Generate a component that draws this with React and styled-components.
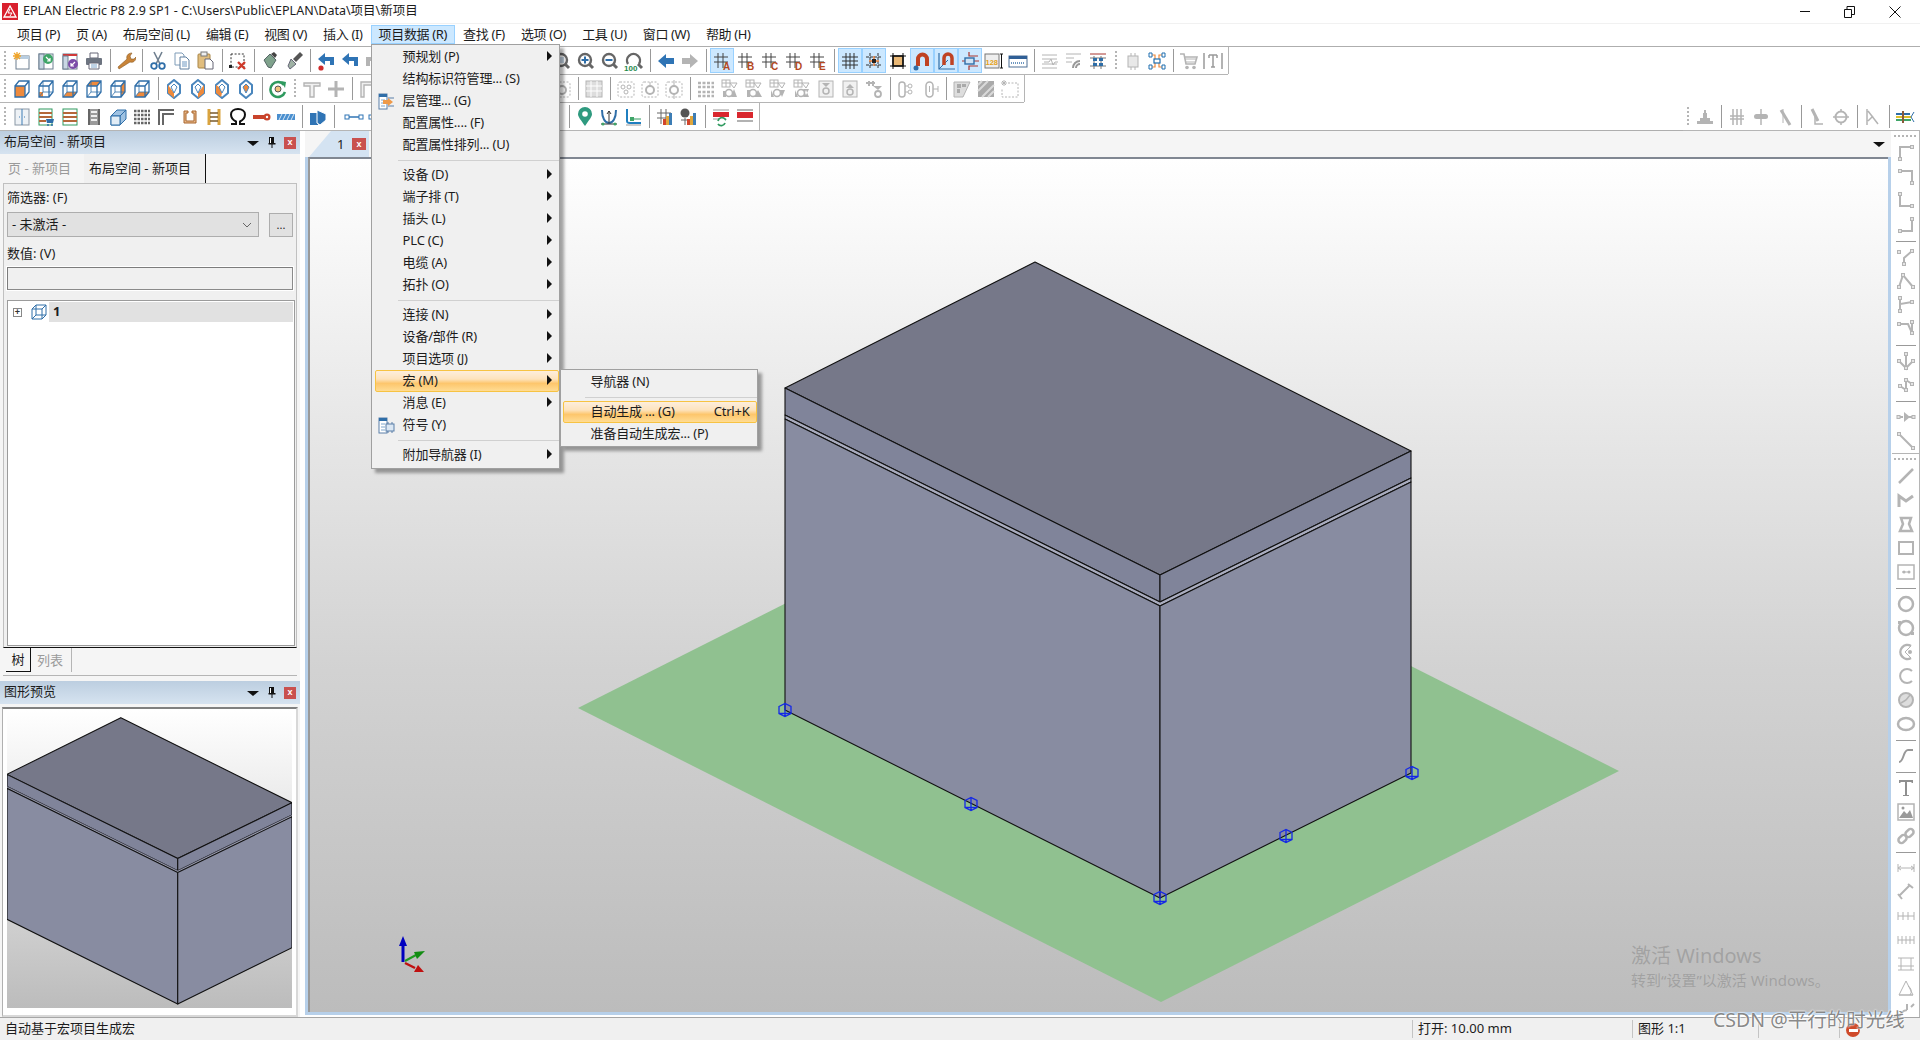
import React from "react";
import styled, { createGlobalStyle } from "styled-components";

const GlobalStyle = createGlobalStyle`
  html, body {
    margin: 0;
    background: #fff;
    overflow: hidden;
  }
`;

const G = "#b4b4b4";
const B = "#2f6ea8";
const O = "#ee8a3c";

const Hash = ({ c = "#444" }) => (
  <path d="M6 2v15M11 2v15M2 6h14M2 11h14" stroke={c} fill="none" />
);
const GridL = ({ l }) => (
  <>
    <Hash />
    <text x="11" y="19" fontSize="10" fontWeight="700" fontFamily="Liberation Sans" fill="#b5481d">{l}</text>
  </>
);
const Cube = ({ f }) => (
  <>
    <path d="M3 7h10v11H3z" fill={f === 0 ? O : "#fff"} />
    <path d="M3 7l4-5h10l-4 5z" fill={f === 1 ? O : "#fff"} />
    <path d="M13 7l4-5v11l-4 5z" fill={f === 2 ? O : "#fff"} />
    {f > 2 && <path d={f === 3 ? "M7 2v11H3v5h4z" : "M7 13h10l-4 5H3z"} fill={O} />}
    <path d="M3 7h10v11H3zM3 7l4-5h10v11l-4 5M13 7l4-5" fill="none" stroke={B} strokeWidth="1.3" />
    {f !== 0 && <path d="M7 2v11H17M7 13l-4 5" fill="none" stroke={B} strokeWidth=".8" />}
  </>
);
const Hex = ({ o }) => (
  <>
    <path d="M10 1l6 5v8l-6 5-6-5V6z" fill="#fff" stroke="#4a86bd" strokeWidth="2" />
    <path d={o} fill={O} />
    <path d="M10 5l3 3-3 6-3-6z" fill="none" stroke="#4a86bd" />
  </>
);
const Mag = ({ c = "#666", children }) => (
  <>
    <circle cx="9" cy="9" r="6" fill="#fff" stroke={c} strokeWidth="2.4" />
    <path d="M13 13l4 4" stroke={c} strokeWidth="3" />
    {children}
  </>
);
const Magnet = () => (
  <path d="M6 15V8a4.5 4.5 0 0 1 9 0v7" fill="none" stroke="#bf4222" strokeWidth="4" />
);
const Bars = () => (
  <path d="M2 4h15M2 8h15M2 13h15M2 17h15" stroke={G} fill="none" />
);
const GreyBox = ({ children }) => (
  <>
    <rect x="3" y="2" width="14" height="16" fill="#f1f1f1" stroke={G} />
    {children}
  </>
);
const Dashed = ({ children }) => (
  <>
    <rect x="2" y="3" width="16" height="15" rx="2" fill="none" stroke={G} strokeDasharray="2 1.5" />
    {children}
  </>
);
const Ring = () => <circle cx="10" cy="11" r="4" fill="none" stroke={G} strokeWidth="2" />;
const GridRing = ({ d = "M3 12h3v6H3zM14 10l3 8h-6z" }) => (
  <>
    <rect x="2" y="1" width="8" height="7" fill="none" stroke={G} />
    <path d="M2 4h8M6 1v7M10 4h7l-3 5z" stroke={G} fill="none" />
    <path d={d} fill={G} />
    <circle cx="9" cy="14" r="3.5" fill="#fff" stroke={G} strokeWidth="1.6" />
  </>
);

const ICONS = {
  newp: (
    <>
      <rect x="4" y="5" width="13" height="13" fill="#fff" stroke="#6d7f90" />
      <rect x="4" y="5" width="13" height="3" fill="#b8cde0" />
      <path d="M5 1v8M1 5h8M2 2l6 6M8 2L2 8" stroke="#f0a52a" strokeWidth="1.3" />
    </>
  ),
  openp: (
    <>
      <rect x="3" y="3" width="14" height="15" fill="#fff" stroke="#6d7f90" />
      <rect x="3" y="3" width="5" height="15" fill="#c9d7e4" stroke="#6d7f90" />
      <circle cx="12" cy="8" r="5" fill="#3fa568" />
      <path d="M10 6l4 4M14 7v3h-3" stroke="#fff" fill="none" strokeWidth="1.2" />
    </>
  ),
  closep: (
    <>
      <rect x="3" y="3" width="14" height="15" fill="#fff" stroke="#6d7f90" />
      <rect x="3" y="3" width="14" height="2" fill="#cf3a3a" />
      <rect x="3" y="5" width="5" height="13" fill="#c9d7e4" stroke="#6d7f90" />
      <circle cx="13" cy="13" r="5" fill="#7c4da8" />
      <path d="M15 11l-4 4M11 12v3h3" stroke="#fff" fill="none" strokeWidth="1.2" />
    </>
  ),
  print: (
    <>
      <path d="M6 2h8v5H6z" fill="#fff" stroke="#667" />
      <rect x="2" y="7" width="16" height="7" rx="1" fill="#6d7480" />
      <path d="M5 12h10v6H5z" fill="#fff" stroke="#667" />
      <path d="M7 14h6M7 16h6" stroke="#7fa6cc" />
    </>
  ),
  wrench: (
    <path d="M3 18l-1-2 9-8c-1-3 1-6 5-6l-2 3 1 3 3 0 2-2c0 4-3 6-6 5z" fill="#c98438" stroke="#8a5a25" strokeWidth=".6" />
  ),
  cut: (
    <>
      <path d="M6 1l6 12M14 1L8 13" stroke="#6f7f8f" strokeWidth="1.6" />
      <circle cx="6" cy="15" r="2.8" fill="none" stroke="#2f6ea8" strokeWidth="1.8" />
      <circle cx="14" cy="15" r="2.8" fill="none" stroke="#2f6ea8" strokeWidth="1.8" />
    </>
  ),
  copy: (
    <>
      <path d="M3 2h7l2 2v10H3z" fill="#fff" stroke="#7f9cb8" />
      <path d="M8 6h6l3 3v9H8z" fill="#fff" stroke="#5f7f9f" />
      <path d="M10 11h5M10 13h5M10 15h5" stroke="#6d97c1" />
    </>
  ),
  paste: (
    <>
      <rect x="2" y="3" width="12" height="14" rx="1" fill="#e0bd7e" stroke="#a98545" />
      <rect x="5" y="1" width="6" height="4" fill="#eee" stroke="#777" />
      <path d="M9 8h5l3 3v7H9z" fill="#fff" stroke="#667" />
    </>
  ),
  seldel: (
    <>
      <rect x="3" y="3" width="13" height="13" fill="none" stroke="#333" strokeDasharray="2 1.6" />
      <rect x="1" y="14" width="3" height="3" fill="#222" />
      <path d="M10 11l7 7M17 11l-7 7" stroke="#cf3a2a" strokeWidth="2.4" />
    </>
  ),
  brushA: (
    <>
      <path d="M4 9l6-6 6 6-5 8-3-1z" fill="#7fa28c" stroke="#566" />
      <path d="M11 3l3-2 3 3-2 3" fill="#444" />
    </>
  ),
  brushB: (
    <>
      <path d="M4 15l3-7 5 5-6 5z" fill="#9fb2a4" stroke="#667" />
      <path d="M9 8l7-7 3 3-7 7z" fill="#555" />
    </>
  ),
  undoR: (
    <>
      <path d="M16 14V8H7" fill="none" stroke="#2f74b5" strokeWidth="4" />
      <path d="M9 2L2 8l7 6z" fill="#2f74b5" />
      <circle cx="5" cy="17" r="2.6" fill="#cf2a2a" />
    </>
  ),
  undoB: (
    <>
      <path d="M16 15V8H7" fill="none" stroke="#2f74b5" strokeWidth="4" />
      <path d="M9 2L2 8l7 6z" fill="#2f74b5" />
    </>
  ),
  redoG: (
    <>
      <path d="M4 15V8h9" fill="none" stroke={G} strokeWidth="4" />
      <path d="M11 2l7 6-7 6z" fill={G} />
    </>
  ),
  zoomW: <Mag><rect x="6" y="6" width="6" height="6" fill="#c6d6e6" /></Mag>,
  zoomIn: <Mag><path d="M5.5 9h7M9 5.500v7" stroke={B} strokeWidth="2" /></Mag>,
  zoomOut: <Mag><path d="M5.500 9h7" stroke={B} strokeWidth="2" /></Mag>,
  zoom100: (
    <>
      <path d="M4 13a6.500 6.500 0 1 1 11 0" fill="none" stroke="#666" strokeWidth="2.400" />
      <path d="M14 13l4 4" stroke="#666" strokeWidth="3" />
      <text x="0" y="20" fontSize="8" fontWeight="700" fontFamily="Liberation Sans" fill="#1f8a4c">100</text>
    </>
  ),
  back: <path d="M10 3L2 10l8 7v-4h8V7h-8z" fill="#2f74b5" />,
  fwd: <path d="M10 3l8 7-8 7v-4H2V7h8z" fill={G} />,
  gA: <GridL l="A" />,
  gB: <GridL l="B" />,
  gC: <GridL l="C" />,
  gD: <GridL l="D" />,
  gE: <GridL l="E" />,
  grid: <path d="M6 2v16M10 2v16M14 2v16M2 6h16M2 10h16M2 14h16" stroke="#333" fill="none" />,
  gridSnap: (
    <>
      <path d="M6 2v16M14 2v16M2 6h16M2 14h16" stroke="#333" fill="none" strokeDasharray="3 1" />
      <path d="M10 5v10M5 10h10" stroke="#e9782d" strokeWidth="1.400" />
      <rect x="8" y="8" width="4" height="4" fill="#222" />
    </>
  ),
  sq: (
    <>
      <rect x="5" y="5" width="10" height="10" fill="#e9b876" stroke="#111" strokeWidth="1.500" />
      <path d="M5 2v16M15 2v16M2 5h16M2 15h16" stroke="#111" fill="none" />
    </>
  ),
  magA: (
    <>
      <Magnet />
      <path d="M4 15v4" stroke="#2f6ea8" strokeWidth="2" />
      <circle cx="4" cy="17" r="2.500" fill="#2f6ea8" />
    </>
  ),
  magB: (
    <>
      <path d="M3 2v16h16" fill="none" stroke="#2f6ea8" strokeWidth="1.200" />
      <path d="M3 18l9-9" stroke="#2f6ea8" />
      <path d="M8 14V7a4 4 0 0 1 8 0v7" fill="none" stroke="#bf4222" strokeWidth="3.500" />
    </>
  ),
  magC: (
    <>
      <path d="M9 1v4H15M9 19v-4H15M2 10h4M14 10h5M15 5h3M15 15h3" fill="none" stroke="#a9342e" strokeWidth="1.200" />
      <rect x="5" y="7" width="9" height="6" fill="#cfe4f6" stroke="#2f6ea8" strokeWidth="1.400" />
    </>
  ),
  n128: (
    <>
      <rect x="1" y="3" width="14" height="14" fill="#eee" stroke="#777" />
      <text x="1.500" y="13.500" fontSize="7.500" fontWeight="700" fontFamily="Liberation Sans" fill="#e4a11b">128</text>
      <path d="M16 3h3M17.500 3v14M16 17h3" stroke="#111" />
    </>
  ),
  disp: (
    <>
      <rect x="1" y="5" width="18" height="11" fill="#fff" stroke="#4d6f95" />
      <rect x="1" y="5" width="18" height="3" fill="#2f5f96" />
      <path d="M3 12h14" stroke="#6d97c1" strokeDasharray="1 1" strokeWidth="2" />
    </>
  ),
  g1: <><Bars /><path d="M4 11h5l2-3 2 6 2-3h3" stroke={G} fill="none" /></>,
  g2: <><path d="M2 3h15M2 7h8M2 11h6" stroke={G} /><path d="M9 17a7 7 0 0 1 7-7M12 17a4 4 0 0 1 4-4" stroke="#999" strokeWidth="2" fill="none" /></>,
  g3: (
    <>
      <path d="M2 3h16" stroke="#a9342e" />
      <path d="M2 7h16M2 15h16" stroke="#777" />
      <path d="M6 5v13M13 5v13" stroke="#777" />
      <path d="M5 7h4v3H5zM11 7h4v3h-4zM5 12h4v3H5zM11 12h4v3h-4z" fill="#2f6ea8" />
    </>
  ),
  chip: <><rect x="5" y="5" width="10" height="11" fill="#e8e8e8" stroke={G} /><path d="M8 2v3M12 2v3M8 16v3M12 16v3" stroke={G} /></>,
  net: (
    <>
      <path d="M4 4h4v5h4V4h4M4 16h4v-5h4v5h4" fill="none" stroke="#ee8a3c" strokeWidth="1.200" />
      <rect x="7" y="8" width="6" height="4" fill="#fff" stroke="#1f6fb0" strokeWidth="1.200" />
      <path d="M2 2h3v4H2zM15 2h3v4h-3zM2 14h3v4H2zM15 14h3v4h-3z" fill="#fff" stroke="#1f6fb0" />
    </>
  ),
  cart: (
    <>
      <path d="M1 3h4l2 10h9l2-7H6" fill="none" stroke={G} strokeWidth="1.600" />
      <path d="M6 8h11M7 11h10" stroke={G} />
      <circle cx="8" cy="16.500" r="1.800" fill={G} />
      <circle cx="15" cy="16.500" r="1.800" fill={G} />
    </>
  ),
  textT: <path d="M1 2v16M19 2v16M6 4h8M10 4v12M8 16h4M6 4v3M14 4v3" stroke="#9a9a9a" strokeWidth="1.500" fill="none" />,

  c1: <Cube f={0} />,
  c2: <Cube f={3} />,
  c3: <Cube f={4} />,
  c4: <Cube f={1} />,
  c5: <Cube f={2} />,
  c6: <Cube f={5} />,
  h1: <Hex o="M4 6l6 8V19l-6-5z" />,
  h2: <Hex o="M16 6l-6 8V19l6-5z" />,
  h3: <Hex o="M4 6l3 2 3 6-1 4-5-4z" />,
  h4: <Hex o="M10 5l3 3-3 6-3-6z" />,
  refresh: (
    <>
      <path d="M16 6a7.500 7.500 0 1 0 1 7" fill="none" stroke="#2f9a5f" strokeWidth="2.500" />
      <path d="M13 2l5 1-1 6z" fill="#2f9a5f" />
      <circle cx="10" cy="10" r="3" fill="#f0c27a" stroke="#555" />
    </>
  ),
  tee: <path d="M2 4h16v3h-6v11H8V7H2z" fill="#f0f0f0" stroke={G} strokeWidth="1.400" />,
  plus: <path d="M10 2v16M2 10h16" stroke={G} strokeWidth="3" />,
  corner: <path d="M3 18V3h15v3H6v12z" fill="#f0f0f0" stroke={G} strokeWidth="1.400" />,
  mg1: <Dashed><Ring /></Dashed>,
  mg2: (
    <>
      <rect x="2" y="2" width="16" height="16" fill="#ddd" stroke={G} />
      <path d="M2 7h16M2 12h16M7 2v16M13 2v16" stroke="#fff" />
    </>
  ),
  d1: <Dashed><circle cx="7" cy="8" r="2" fill="none" stroke={G} /><circle cx="13" cy="8" r="2" fill="none" stroke={G} /><circle cx="10" cy="13" r="2" fill="none" stroke={G} /></Dashed>,
  d2: <Dashed><path d="M10 3v4" stroke={G} /><Ring /></Dashed>,
  d3: <Dashed><path d="M10 1v5M10 15v5" stroke={G} /><Ring /></Dashed>,
  v1: <path d="M2 4h16M2 8h16M2 13h16M2 17h16" stroke={G} strokeWidth="2.500" strokeDasharray="3 1.500" fill="none" />,
  v2: <GridRing />,
  v3: <GridRing d="M3 11h3v7H3zM14 11l4 7h-8z" />,
  v4: <GridRing d="M3 11v7h3M11 11h6l-3 7z" />,
  v5: <GridRing d="M3 11v7h3M11 18h6l-3-7zM11 10h6l-3 6z" />,
  v6: <GreyBox><path d="M6 4h8l-4 4z" fill={G} /><circle cx="10" cy="12" r="3" fill="none" stroke={G} strokeWidth="1.500" /></GreyBox>,
  v7: <GreyBox><path d="M6 9h8l-4-4z" fill={G} /><circle cx="10" cy="13" r="3" fill="none" stroke={G} strokeWidth="1.500" /></GreyBox>,
  v8: <><path d="M2 4h9M5 2v5M9 2v5" stroke={G} strokeWidth="2" /><path d="M9 7h9l-4 4z" fill={G} /><circle cx="14" cy="15" r="3" fill="none" stroke={G} strokeWidth="1.800" /></>,
  w1: <><rect x="3" y="3" width="6" height="15" rx="3" fill="none" stroke={G} strokeWidth="1.500" /><circle cx="14" cy="7" r="2" fill="none" stroke={G} /><circle cx="14" cy="13" r="2" fill="none" stroke={G} /><path d="M9 7h3M9 13h3" stroke={G} /></>,
  w2: <><rect x="6" y="3" width="7" height="15" rx="3.500" fill="none" stroke={G} strokeWidth="1.500" /><path d="M9.500 7v6M13 10h5M18 7v6" stroke={G} /></>,
  x1: <><path d="M2 3h16l-7 15H2z" fill="#ddd" stroke={G} /><path d="M5 5h4v4H5zM10 5h4v3h-4zM5 10h3v4H5z" fill="#aaa" /></>,
  x2: <><rect x="2" y="2" width="16" height="16" fill="#aaa" /><path d="M2 12L12 2M6 18L18 6M12 18l6-6M2 6l4-4" stroke="#d9d9d9" strokeWidth="2" /></>,
  x3: <><path d="M8 4h10v14H2V9" fill="none" stroke={G} strokeDasharray="2 1.500" /><path d="M4 1v6M1 4h6M2 2l4 4M6 2L2 6" stroke={G} /></>,

  cabinet: (
    <>
      <rect x="3" y="2" width="14" height="16" fill="#eef2f6" stroke="#8a97a5" />
      <path d="M10 2v16M7 10h1M12 10h1" stroke="#3d7db5" />
    </>
  ),
  listCart: (
    <>
      <rect x="3" y="2" width="13" height="16" fill="#fff" stroke="#2f9a5f" />
      <path d="M3 6h13M3 10h13M3 14h7" stroke="#b5683a" strokeWidth="2" />
      <path d="M10 12h8l-1 4h-6z" fill="#2f6ea8" />
      <circle cx="12" cy="18" r="1" fill="#2f6ea8" />
      <circle cx="16" cy="18" r="1" fill="#2f6ea8" />
    </>
  ),
  stripes: (
    <>
      <rect x="3" y="2" width="14" height="16" fill="#fff" stroke="#2f9a5f" />
      <path d="M3 6h14M3 10h14M3 14h14" stroke="#b5683a" strokeWidth="2" />
    </>
  ),
  rail: (
    <>
      <path d="M5 2v16M15 2v16" stroke="#666" strokeWidth="2" />
      <path d="M6 2h8v16H6z" fill="#9a9a9a" />
      <path d="M7 5h6M7 9h6M7 13h6" stroke="#eee" strokeWidth="2" />
    </>
  ),
  box3d: (
    <>
      <path d="M3 9l6-6h9v9l-6 6H3z" fill="#9fc2e2" stroke="#2f6ea8" />
      <path d="M3 9h9v9M12 9l6-6" stroke="#2f6ea8" fill="none" />
      <path d="M3 9h9v9H3z" fill="#e2edf6" stroke="#2f6ea8" />
    </>
  ),
  dotgrid: <path d="M2 4h16M2 8h16M2 12h16M2 16h16" stroke="#666" strokeWidth="2.400" strokeDasharray="2.500 1" />,
  corner2: <path d="M3 18V3h15M7 18V7h11" fill="none" stroke="#666" strokeWidth="2" />,
  uorange: <path d="M4 4h4v2H6v8h8V6h-2V4h4v12H4z" fill="#e6b98a" stroke="#a9642c" />,
  ladder: (
    <>
      <path d="M5 2v16M15 2v16" stroke="#d9a33f" strokeWidth="3" />
      <path d="M6 6h8M6 10h8M6 14h8" stroke="#7a5a2a" strokeWidth="1.500" />
    </>
  ),
  omega: (
    <path d="M3 17h5v-2.500C5 13 3 10.500 3 7.500 3 4 6 2 10 2s7 2 7 5.500c0 3-2 5.500-5 7V17h5" fill="none" stroke="#111" strokeWidth="2" />
  ),
  pinRed: (
    <>
      <rect x="1" y="8" width="13" height="4" fill="#c9442c" />
      <circle cx="15" cy="10" r="3.500" fill="#c9442c" />
      <circle cx="15" cy="10" r="1.200" fill="#fff" />
    </>
  ),
  barBlue: (
    <>
      <rect x="1" y="7" width="18" height="6" fill="#4a8fcf" />
      <path d="M3 13l3-6M7 13l3-6M11 13l3-6M15 13l3-6" stroke="#d8e8f6" />
    </>
  ),
  blueShape: (
    <>
      <path d="M2 6h8v12H2z" fill="#2f74b5" />
      <path d="M9 3l9 4v6l-6 5-3-2z" fill="#2f74b5" stroke="#fff" />
    </>
  ),
  conn: (
    <>
      <path d="M3 10h14" stroke="#2f74b5" strokeWidth="1.500" />
      <rect x="1" y="8" width="4" height="4" fill="#fff" stroke="#2f74b5" />
      <rect x="15" y="8" width="4" height="4" fill="#fff" stroke="#2f74b5" />
    </>
  ),
  pin: (
    <>
      <path d="M10 19C6 13 3 10 3 7a7 7 0 0 1 14 0c0 3-3 6-7 12z" fill="#2f9a7f" />
      <circle cx="10" cy="7" r="2.800" fill="#fff" />
    </>
  ),
  uBlue: (
    <>
      <path d="M3 3c0 8 3 13 7 13s7-5 7-13" fill="none" stroke="#2f6ea8" strokeWidth="2" />
      <path d="M10 4v12M2 17h16" stroke="#333" />
      <path d="M8 7l2-3 2 3" fill="none" stroke="#333" />
      <circle cx="4" cy="17" r="1.500" fill="#3fa568" />
      <circle cx="16" cy="17" r="1.500" fill="#3fa568" />
    </>
  ),
  lBlue: (
    <>
      <path d="M4 2v12c0 2 1 2 3 2h11" fill="none" stroke="#1f7fc0" strokeWidth="2" />
      <path d="M8 12h10" stroke="#2f9a5f" />
      <rect x="7" y="10" width="4" height="4" fill="#3fa568" />
      <path d="M3 18h15" stroke="#999" />
    </>
  ),
  gridChart: (
    <>
      <Hash c="#666" />
      <rect x="8" y="12" width="3" height="6" fill="#d2452c" />
      <rect x="11" y="9" width="3" height="9" fill="#e0a63b" />
      <rect x="14" y="6" width="3" height="12" fill="#3d7db5" />
    </>
  ),
  gearChart: (
    <>
      <circle cx="6" cy="6" r="4.500" fill="#555" />
      <path d="M2 13h9M6 11v7" stroke="#666" />
      <rect x="8" y="12" width="3" height="6" fill="#d2452c" />
      <rect x="11" y="9" width="3" height="9" fill="#e0a63b" />
      <rect x="14" y="6" width="3" height="12" fill="#3d7db5" />
    </>
  ),
  stripeRefresh: (
    <>
      <path d="M2 3h16" stroke="#999" />
      <rect x="2" y="5" width="16" height="5" fill="#d9272e" />
      <path d="M2 12h6" stroke="#999" />
      <path d="M7 14a4 4 0 0 1 7-2l1 1M14 16a4 4 0 0 1-7 1" fill="none" stroke="#2f9a5f" strokeWidth="1.800" />
    </>
  ),
  stripeRed: (
    <>
      <path d="M2 3h16M2 14h16" stroke="#999" strokeWidth="1.400" />
      <rect x="2" y="5" width="16" height="6" fill="#d9272e" />
    </>
  ),

  stamp: <path d="M2 14h16v3H2zM5 11h10v3H5zM8 6h4v5H8zM9 3h2v3H9z" fill={G} />,
  bar3: <path d="M6 2v16M10 2v16M14 2v16M3 9h14M3 12h14" stroke={G} strokeWidth="1.500" />,
  ovalV: <><path d="M10 2v16" stroke={G} strokeWidth="1.500" /><rect x="3" y="7" width="14" height="5" rx="2.500" fill={G} /></>,
  slash: <><path d="M6 3l9 15" stroke={G} strokeWidth="3" /><path d="M8 2v14" stroke={G} /></>,
  slashL: <><path d="M5 2l6 12" stroke={G} strokeWidth="3" /><path d="M8 8v9h8" stroke={G} strokeWidth="1.500" fill="none" /></>,
  circleBar: <><circle cx="10" cy="10" r="5.500" fill="none" stroke={G} strokeWidth="2" /><path d="M2 10h16M10 2v3M10 15v3" stroke={G} strokeWidth="1.500" /></>,
  triV: <path d="M4 2v16M5 4l10 13M5 14l5-5" stroke={G} strokeWidth="1.500" fill="none" />,
  rainbow: (
    <>
      <path d="M1 7h14" stroke="#2f6ea8" strokeWidth="2" />
      <path d="M1 10h15" stroke="#e0c02a" strokeWidth="2" />
      <path d="M1 13h15" stroke="#3fa568" strokeWidth="2" />
      <path d="M8 4v12" stroke="#8a5a3a" strokeWidth="2" />
      <path d="M19 5l-3 5 3 5" fill="none" stroke="#2f6ea8" />
    </>
  ),
};

const routeIcon = (pts, nodes) => (
  <>
    <polyline points={pts} fill="none" stroke={G} strokeWidth="2" />
    {nodes.map(([x, y], i) => (
      <rect key={i} x={x - 1.5} y={y - 1.5} width="3" height="3" fill="#e4e4e4" stroke={G} />
    ))}
  </>
);
const VERT = [
  routeIcon("4,16 4,4 16,4", [[4, 16], [16, 4]]),
  routeIcon("4,4 16,4 16,16", [[4, 4], [16, 16]]),
  routeIcon("4,3 4,15 16,15", [[4, 3], [16, 15]]),
  routeIcon("4,16 16,16 16,4", [[4, 16], [16, 4]]),
  "|",
  routeIcon("16,4 8,11 8,17 M3,5", [[3, 5], [16, 4], [8, 17]]),
  routeIcon("3,16 7,4 17,16", [[7, 4], [3, 16], [17, 16]]),
  routeIcon("4,3 4,16 4,9 16,7", [[4, 3], [4, 16], [16, 7]]),
  routeIcon("3,5 12,5 16,14 16,3", [[3, 5], [16, 3], [16, 14]]),
  "|",
  routeIcon("10,3 10,17 3,10 10,17 17,10", [[10, 3], [3, 10], [17, 10], [10, 17]]),
  routeIcon("4,11 10,15 10,5 16,9", [[4, 11], [16, 9], [10, 5], [10, 15]]),
  "|",
  <>
    <path d="M2 10h5M13 10h5" stroke={G} strokeWidth="2" />
    <path d="M8 5l6 5-6 5z" fill={G} />
    <rect x="1" y="8.500" width="3" height="3" fill="#e4e4e4" stroke={G} />
    <rect x="16" y="8.500" width="3" height="3" fill="#e4e4e4" stroke={G} />
  </>,
  routeIcon("3,3 17,17", [[3, 3], [17, 17]]),
  "line",
  <path d="M3 17L17 3" stroke={G} strokeWidth="2.500" />,
  <path d="M3 17V6l7 5 7-5" fill="none" stroke={G} strokeWidth="3" />,
  <path d="M5 4h10l-2 6 3 7H4l3-7z" fill="none" stroke={G} strokeWidth="2.500" />,
  <rect x="3" y="4" width="14" height="12" fill="none" stroke={G} strokeWidth="2" />,
  <>
    <rect x="2" y="3" width="16" height="14" fill="#fff" stroke={G} strokeWidth="1.500" />
    <path d="M6 10h8" stroke={G} />
    <circle cx="8" cy="10" r="1.500" fill={G} />
    <circle cx="13" cy="10" r="1.500" fill={G} />
  </>,
  "|",
  <circle cx="10" cy="10" r="7" fill="none" stroke={G} strokeWidth="2.500" />,
  <>
    <circle cx="10" cy="10" r="7" fill="none" stroke={G} strokeWidth="2.500" />
    <rect x="2" y="3" width="3" height="3" fill={G} />
    <rect x="15" y="14" width="3" height="3" fill={G} />
  </>,
  <>
    <path d="M15 4a7 7 0 1 0 0 12" fill="none" stroke={G} strokeWidth="2.500" />
    <path d="M15 4L9 10l6 6" fill="none" stroke={G} />
    <circle cx="14" cy="10" r="2" fill={G} />
  </>,
  <path d="M16 5a7 7 0 1 0 0 10" fill="none" stroke={G} strokeWidth="2" />,
  <>
    <circle cx="10" cy="10" r="7" fill="#ddd" stroke={G} strokeWidth="2" />
    <path d="M10 10l4-5M10 10l-5 3" stroke={G} strokeWidth="1.500" />
  </>,
  <ellipse cx="10" cy="10" rx="8" ry="6" fill="none" stroke={G} strokeWidth="2.500" />,
  "|",
  <path d="M3 16c5 0 4-12 9-12h5" fill="none" stroke="#999" strokeWidth="2" />,
  "|",
  <path d="M3 2h14v3h-1l-1-1h-4v13h2v1H7v-1h2V4H5L4 5H3z" fill="#8f8f8f" />,
  <>
    <rect x="2" y="2" width="16" height="16" fill="#fff" stroke={G} strokeWidth="1.500" />
    <path d="M3 16l5-7 3 3 3-4 3 8z" fill="#9a9a9a" />
    <circle cx="7" cy="6" r="1.500" fill="#9a9a9a" />
  </>,
  <>
    <rect x="2" y="10" width="9" height="6" rx="3" transform="rotate(-45 6.500 13)" fill="none" stroke={G} strokeWidth="2.500" />
    <rect x="9" y="4" width="9" height="6" rx="3" transform="rotate(-45 13.500 7)" fill="none" stroke={G} strokeWidth="2.500" />
  </>,
  "|",
  <path d="M2 6v8M18 6v8M2 10h16M5 8l-3 2 3 2M15 8l3 2-3 2" fill="none" stroke={G} />,
  <path d="M3 14L14 3M2 12l4 5M12 2l5 4" fill="none" stroke={G} strokeWidth="2" />,
  <path d="M2 6v8M18 6v8M7 6v8M12 6v8M2 10h16" fill="none" stroke={G} />,
  <path d="M2 6v8M18 6v8M6 6v8M10 6v8M14 6v8M2 10h16" fill="none" stroke={G} />,
  <path d="M2 4h16M2 16h16M5 4v12M15 4v12M2 12h16" fill="none" stroke={G} />,
  <path d="M3 17L10 3l7 14zM3 17h14M12 8a6 6 0 0 1 2 9" fill="none" stroke={G} />,
  <path d="M3 17a9 9 0 0 1 8-9M11 2v6M15 5l3-3" fill="none" stroke={G} strokeWidth="2" />,
];

const ROW1 = [
  ".", "newp", "openp", "closep", "print", "|", "wrench", "|", "cut", "copy", "paste", "|", "seldel", "|",
  "brushA", "brushB", "|", "undoR", "undoB", "redoG", 164,
  "zoomW", "zoomIn", "zoomOut", "zoom100", "|", "back", "fwd", "|",
  "+gA", "gB", "gC", "gD", "gE", "|", "+grid", "+gridSnap", "sq", "+magA", "+magB", "+magC", "n128", "disp", "|", "g1", "g2", "g3",
];
const ROW1B = [".", "chip", "net", "|", "cart", "textT"];
const ROW2 = [
  ".", "c1", "c2", "c3", "c4", "c5", "c6", "|", "h1", "h2", "h3", "h4", "|", "refresh", ".", "tee", "plus", "|", "corner", 170,
  "mg1", "|", "mg2", "|", "d1", "d2", "d3", "|", "v1", "v2", "v3", "v4", "v5", "v6", "v7", "v8", "|", "w1", "w2", "|", "x1", "x2", "x3",
];
const ROW3 = [
  ".", "cabinet", "listCart", "stripes", "rail", "box3d", "dotgrid", "corner2", "uorange", "ladder", "omega", "pinRed", "barBlue", "|",
  "blueShape", "|", 4, "conn", "conn", 175, "|", "pin", "uBlue", "lBlue", "|", "gridChart", "gearChart", "|", "stripeRefresh", "stripeRed",
];
const ROW3B = [".", "stamp", "|", "bar3", "ovalV", "slash", "|", "slashL", "circleBar", "|", "triV", "|", "rainbow"];

const MENUS = [
  "项目 (P)", "页 (A)", "布局空间 (L)", "编辑 (E)", "视图 (V)", "插入 (I)", "项目数据 (R)",
  "查找 (F)", "选项 (O)", "工具 (U)", "窗口 (W)", "帮助 (H)",
];

const DROPDOWN = [
  { t: "预规划 (P)", sub: true },
  { t: "结构标识符管理... (S)" },
  { t: "层管理... (G)", icon: "layer" },
  { t: "配置属性.... (F)" },
  { t: "配置属性排列... (U)" },
  "-",
  { t: "设备 (D)", sub: true },
  { t: "端子排 (T)", sub: true },
  { t: "插头 (L)", sub: true },
  { t: "PLC (C)", sub: true },
  { t: "电缆 (A)", sub: true },
  { t: "拓扑 (O)", sub: true },
  "-",
  { t: "连接 (N)", sub: true },
  { t: "设备/部件 (R)", sub: true },
  { t: "项目选项 (J)", sub: true },
  { t: "宏 (M)", sub: true, active: true },
  { t: "消息 (E)", sub: true },
  { t: "符号 (Y)", icon: "symbol" },
  "-",
  { t: "附加导航器 (I)", sub: true },
];

const FONT = `"Noto Sans", "Noto Sans CJK SC", sans-serif`;
const HOT = "linear-gradient(#fdeedd 0%, #fde3bd 40%, #fdc66c 62%, #ffdc93 100%)";

const Page = styled.div`
  position: relative;
  width: 1920px;
  height: 1040px;
  display: flex;
  flex-direction: column;
  overflow: hidden;
  background: #fff;
  font: 13px/1 ${FONT};
  color: #1c1c1c;
`;

const TitleBar = styled.div`
  height: 23px;
  display: flex;
  align-items: center;
  padding-left: 2px;
  font-size: 12.5px;
`;

const TitleText = styled.span`
  margin-left: 5px;
  white-space: nowrap;
`;

const WindowButtons = styled.div`
  margin-left: auto;
  display: flex;
  padding-right: 3px;
`;

const WindowButton = styled.div`
  width: 45px;
  height: 23px;
  display: flex;
  align-items: center;
  justify-content: center;
`;

const MenuBar = styled.div`
  height: 21px;
  display: flex;
  align-items: flex-start;
  border-top: 1px solid #f1f1f1;
  padding: 1px 0 0 9px;
  letter-spacing: -0.35px;
`;

const MenuItem = styled.div`
  position: relative;
  box-sizing: border-box;
  height: 19px;
  display: flex;
  align-items: center;
  padding: 0 7px 1px;
  white-space: nowrap;
  border: 1px solid ${(p) => (p.$open ? "#99d1ff" : "transparent")};
  background: ${(p) => (p.$open ? "#cce8ff" : "transparent")};
`;

const ToolArea = styled.div`
  display: flex;
  flex-direction: column;
  border-top: 1px solid #aeaeae;
  border-bottom: 1px solid #aeaeae;
`;

const ToolRow = styled.div`
  height: 27px;
  display: flex;
  justify-content: space-between;
  align-items: stretch;
  & + & {
    margin-top: 1px;
  }
`;

const ToolBar = styled.div`
  display: flex;
  align-items: center;
  padding-right: ${(p) => p.$pad || 0}px;
  box-shadow: 0 1px 0 #b5b5b5, 1px 0 0 #b5b5b5;
`;

const Gripper = styled.div`
  width: 10px;
  height: 20px;
  flex: none;
  background: radial-gradient(circle at 1px 1px, #b5b5b5 1px, transparent 1px) 4px 0 / 2px 4px repeat-y;
`;

const Spacer = styled.div`
  flex: none;
  width: ${(p) => p.$w}px;
`;

const Sep = styled.div`
  flex: none;
  width: 8px;
  height: 23px;
  background: linear-gradient(#999, #999) center / 1px 100% no-repeat;
`;

const ToolButton = styled.div`
  flex: none;
  box-sizing: border-box;
  width: 24px;
  height: 25px;
  display: flex;
  align-items: center;
  justify-content: center;
  background: ${(p) => (p.$on ? "#cce8ff" : "transparent")};
  box-shadow: ${(p) => (p.$on ? "inset 0 0 0 1px #99d1ff" : "none")};
`;

const Main = styled.div`
  flex: 1;
  min-height: 0;
  display: flex;
`;

const Dock = styled.div`
  width: 300px;
  flex: none;
  display: flex;
  flex-direction: column;
  background: #f5f5f5;
`;

const PanelTitle = styled.div`
  height: 23px;
  flex: none;
  box-sizing: border-box;
  display: flex;
  align-items: center;
  padding: 0 4px 2px;
  background: linear-gradient(#bccee0, #d6e3f0);
  font-size: 13px;
`;

const TitleTools = styled.div`
  margin-left: auto;
  display: flex;
  align-items: center;
  gap: 7px;
  margin-bottom: -2px;
`;

const CloseBox = styled.div`
  width: ${(p) => p.$w || 12}px;
  height: 12px;
  display: flex;
  align-items: center;
  justify-content: center;
  background: #c9514f;
  color: #fff;
  font: 700 9px/1 "Liberation Sans", sans-serif;
`;

const DockTabs = styled.div`
  height: 29px;
  flex: none;
  display: flex;
  align-items: center;
  padding-left: 8px;
`;

const DockTab = styled.div`
  height: 100%;
  display: flex;
  align-items: center;
  color: ${(p) => (p.$active ? "#1c1c1c" : "#9a9a9a")};
  background: ${(p) => (p.$active ? "#f0f0f0" : "transparent")};
  padding: ${(p) => (p.$active ? "0 14px 0 5px" : "0 13px 0 0")};
  border-right: ${(p) => (p.$active ? "1px solid #111" : "0")};
`;

const PanelBody = styled.div`
  flex: none;
  box-sizing: border-box;
  height: 465px;
  margin: 0 3px;
  padding: 6px 3px 0;
  display: flex;
  flex-direction: column;
  background: #f0f0f0;
  border: 1px solid #c0c0c0;
  border-bottom: 1px solid #111;
`;

const FieldLabel = styled.div`
  height: 14px;
  display: flex;
  align-items: center;
  margin-top: ${(p) => p.$top || 0}px;
`;

const FilterRow = styled.div`
  display: flex;
  gap: 10px;
  margin-top: 8px;
`;

const Select = styled.div`
  box-sizing: border-box;
  width: 253px;
  height: 25px;
  display: flex;
  align-items: center;
  justify-content: space-between;
  padding: 0 6px 0 4px;
  background: #e1e1e1;
  border: 1px solid #adadad;
`;

const DotsButton = styled.div`
  box-sizing: border-box;
  width: 24px;
  height: 24px;
  margin-top: 1px;
  display: flex;
  align-items: flex-end;
  justify-content: center;
  padding-bottom: 6px;
  background: #e1e1e1;
  border: 1px solid #adadad;
  font-size: 11px;
`;

const ValueInput = styled.div`
  box-sizing: border-box;
  width: 286px;
  height: 23px;
  margin-top: 7px;
  background: #f0f0f0;
  border: 1px solid;
  border-color: #7c7c7c #8a8a8a #8a8a8a #7c7c7c;
  box-shadow: 0 0 0 1px #fff;
`;

const Tree = styled.div`
  flex: 1;
  margin: 10px 0 1px;
  width: 288px;
  box-sizing: border-box;
  background: #fff;
  border: 1px solid #9b9b9b;
  padding: 1px 1px 0 5px;
`;

const TreeRow = styled.div`
  height: 20px;
  display: flex;
  align-items: center;
`;

const Expander = styled.div`
  box-sizing: border-box;
  width: 9px;
  height: 9px;
  border: 1px solid #888;
  display: flex;
  align-items: center;
  justify-content: center;
  font: 700 9px/1 "Liberation Sans", sans-serif;
  color: #333;
  margin-right: 9px;
  flex: none;
`;

const TreeLabel = styled.div`
  flex: 1;
  height: 100%;
  box-sizing: border-box;
  margin-left: 2px;
  padding: 0 0 2px 4px;
  display: flex;
  align-items: center;
  background: #e1e1e1;
  font-weight: 700;
`;

const BottomTabs = styled.div`
  height: 28px;
  flex: none;
  margin: 0 3px;
  padding-left: 3px;
  display: flex;
  border-bottom: 1px solid #b5b5b5;
  box-sizing: border-box;
`;

const BottomTab = styled.div`
  width: ${(p) => (p.$active ? 25 : 41)}px;
  box-sizing: border-box;
  height: 24px;
  display: flex;
  align-items: center;
  white-space: nowrap;
  justify-content: ${(p) => (p.$active ? "center" : "flex-end")};
  padding-right: ${(p) => (p.$active ? 0 : 8)}px;
  color: ${(p) => (p.$active ? "#1c1c1c" : "#9a9a9a")};
  border-right: 1px solid ${(p) => (p.$active ? "#111" : "#b5b5b5")};
  border-bottom: ${(p) => (p.$active ? "1px solid #111" : "0")};
`;

const SecondTitle = styled(PanelTitle)`
  margin-top: 5px;
`;

const PreviewFrame = styled.div`
  flex: 1;
  min-height: 0;
  margin: 3px 2px 0;
  padding: 1px 4px 7px;
  background: #fff;
  border-top: 2px solid #808080;
  border-left: 1px solid #b0b0b0;
  border-right: 2px solid #d8d8d8;
  border-bottom: 2px solid #d8d8d8;
  display: flex;
  box-sizing: border-box;
`;

const PreviewCanvas = styled.svg`
  display: block;
  width: 100%;
  height: 100%;
  background: linear-gradient(#fff 0%, #e8e8e8 35%, #bcbcbc 100%);
`;

const Doc = styled.div`
  flex: 1;
  min-width: 0;
  margin-left: 5px;
  display: flex;
  flex-direction: column;
  background: #fff;
`;

const DocTabs = styled.div`
  height: 26px;
  flex: none;
  display: flex;
  align-items: center;
  justify-content: space-between;
  padding: 0 6px 0 0;
  background: #f5f5f5;
`;

const DocTab = styled.div`
  width: 60px;
  height: 26px;
  margin-left: 4px;
  padding-left: 28px;
  box-sizing: border-box;
  display: flex;
  align-items: center;
  justify-content: space-between;
  padding-right: 3px;
  background: #d4e3f2;
  clip-path: polygon(0 100%, 22px 0, 100% 0, 100% 100%);
  font-size: 13px;
`;

const Frame = styled.div`
  flex: 1;
  min-height: 0;
  position: relative;
  border: solid #b7d0ea;
  border-width: 0 3px 3px 3px;
  margin-bottom: 2px;
  box-shadow: 0 2px 0 #fff;
`;

const Viewport = styled.div`
  position: relative;
  height: 100%;
  box-sizing: border-box;
  border-top: 2px solid #808792;
  border-left: 2px solid #9a9a9a;
  background: linear-gradient(#fff 0%, #e8e8e8 30%, #d2d2d2 60%, #bcbcbc 100%);
  overflow: hidden;
`;

const Scene = styled.svg`
  display: block;
  width: 100%;
  height: 100%;
`;

const Activate = styled.div`
  position: absolute;
  left: 1321px;
  top: 785px;
  color: rgba(120, 120, 120, 0.42);
  white-space: nowrap;
`;

const ActivateTitle = styled.div`
  font-size: 20px;
  line-height: 24px;
`;

const ActivateHint = styled.div`
  font-size: 15px;
  line-height: 24px;
`;

const SideBar = styled.div`
  width: 27px;
  flex: none;
  margin-left: 1px;
  border-right: 1px solid #b5b5b5;
  overflow: hidden;
  display: flex;
  flex-direction: column;
  align-items: center;
`;

const SideGripper = styled.div`
  width: 24px;
  height: 10px;
  flex: none;
  background: radial-gradient(circle at 1px 1px, #b5b5b5 1px, transparent 1px) 0 4px / 4px 2px repeat-x;
`;

const SideLine = styled.div`
  width: 100%;
  height: 1px;
  flex: none;
  background: #b5b5b5;
`;

const SideSep = styled.div`
  width: 20px;
  height: 8px;
  flex: none;
  background: linear-gradient(#999, #999) center / 100% 1px no-repeat;
`;

const SideButton = styled.div`
  width: 24px;
  height: 24px;
  flex: none;
  display: flex;
  align-items: center;
  justify-content: center;
`;

const StatusBar = styled.div`
  height: 23px;
  flex: none;
  box-sizing: border-box;
  display: flex;
  background: #f0f0f0;
  border-top: 1px solid #a6a6a6;
`;

const StatusCell = styled.div`
  box-sizing: border-box;
  width: ${(p) => p.$w}px;
  flex: ${(p) => (p.$w ? "none" : 1)};
  display: flex;
  align-items: center;
  padding: 0 0 2px 5px;
  border-right: ${(p) => (p.$w ? "1px solid #c4c4c4" : "0")};
  margin: 2px 0;
`;

const Dropdown = styled.div`
  position: absolute;
  left: -1px;
  top: 18px;
  z-index: 5;
  box-sizing: border-box;
  width: 189px;
  padding: 1px 0 2px 1px;
  background: #f0f0f0;
  border: 1px solid #a0a0a0;
  box-shadow: 4px 4px 3px rgba(0, 0, 0, 0.35);
  letter-spacing: -0.2px;
`;

const Flyout = styled(Dropdown)`
  left: 100%;
  top: -2px;
  width: 198px;
  padding: 1px 0;
  margin-left: 2px;
`;

const DropRow = styled.div`
  position: relative;
  box-sizing: border-box;
  height: 22px;
  margin: ${(p) => (p.$inset ? "0 0 0 2px" : "0")};
  padding: 0 6px 2px ${(p) => (p.$inset ? 27 : 29)}px;
  display: flex;
  align-items: center;
  justify-content: space-between;
  white-space: nowrap;
  background: ${(p) => (p.$active ? HOT : "transparent")};
  border: 1px solid ${(p) => (p.$active ? "#f7c343" : "transparent")};
  border-radius: ${(p) => (p.$active ? 2 : 0)}px;
`;

const DropSep = styled.div`
  height: 8px;
  margin-left: ${(p) => p.$left || 25}px;
  background: linear-gradient(#d0d0d0, #d0d0d0) center / 100% 1px no-repeat;
`;

const DropIcon = styled.div`
  position: absolute;
  left: 4px;
  top: 2px;
  width: 17px;
  height: 17px;
`;

const Arrow = styled.div`
  width: 0;
  height: 0;
  border-left: 5px solid #111;
  border-top: 5px solid transparent;
  border-bottom: 5px solid transparent;
`;

const Caret = styled.div`
  width: 0;
  height: 0;
  border-top: 5px solid #111;
  border-left: 6px solid transparent;
  border-right: 6px solid transparent;
  margin-top: 1px;
`;

const Watermark = styled.div`
  position: absolute;
  left: 1713px;
  top: 1007px;
  z-index: 6;
  font-size: 19.5px;
  line-height: 26px;
  white-space: nowrap;
  color: rgba(105, 105, 105, 0.8);
  text-shadow: 0 0 2px #fff, 0 0 2px #fff;
`;

const NoEntry = styled.div`
  position: absolute;
  left: 1846px;
  top: 1023px;
  z-index: 5;
  width: 14px;
  height: 14px;
  border-radius: 50%;
  background: #cf4a2a;
  display: flex;
  align-items: center;
  justify-content: center;
  &::after {
    content: "";
    width: 9px;
    height: 3px;
    background: #fff;
  }
`;

const Icon = ({ name }) => (
  <svg width="20" height="20" viewBox="0 0 20 20">
    {ICONS[name]}
  </svg>
);

const Tools = ({ items }) =>
  items.map((it, i) => {
    if (it === ".") return <Gripper key={i} />;
    if (it === "|") return <Sep key={i} />;
    if (typeof it === "number") return <Spacer key={i} $w={it} />;
    const on = it[0] === "+";
    return (
      <ToolButton key={i} $on={on}>
        <Icon name={on ? it.slice(1) : it} />
      </ToolButton>
    );
  });

const LayerIcon = ({ kind }) => (
  <svg width="17" height="17" viewBox="0 0 17 17">
    <rect x="1" y="1" width="8" height="15" fill="#fff" stroke="#5a7fa8" />
    <rect x="1" y="1" width="8" height="3" fill="#2f6ea8" />
    <path d="M3 7h4M3 10h4M3 13h4" stroke="#7fa6cc" />
    {kind === "layer" ? (
      <>
        <path d="M10 5h6M10 13h6" stroke="#5a7fa8" />
        <path d="M5 7h5V5l5 4-5 4v-2H5z" fill="#ee9a4a" />
      </>
    ) : (
      <>
        <rect x="8" y="7" width="8" height="7" fill="#dbe7f3" stroke="#5a7fa8" />
        <path d="M10 5v2M14 5v2M10 14v2M14 14v2" stroke="#5a7fa8" />
      </>
    )}
  </svg>
);

// the preview is less than half the size, so its rim lines have to stay thin
const Enclosure = ({ small }) => {
  const rim = small ? { stroke: "#55586a", strokeWidth: 0.6 } : {};
  return (
    <g stroke="#111" strokeWidth="1.100" strokeLinejoin="round">
      <polygon vectorEffect="non-scaling-stroke" points="1035,262 1411,451 1160,575 785,388" fill="#767889" />
      <polygon vectorEffect="non-scaling-stroke" points="785,388 1160,575 1160,602 785,415" fill="#80849a" />
      <polygon vectorEffect="non-scaling-stroke" points="1160,575 1411,451 1411,478 1160,602" fill="#80849a" />
      <polygon vectorEffect="non-scaling-stroke" points="785,415 1160,602 1411,478 1411,482 1160,606 785,419" fill="#a9acbe" {...rim} />
      <polygon vectorEffect="non-scaling-stroke" points="785,419 1160,606 1160,898 785,710" fill="#888ca1" />
      <polygon vectorEffect="non-scaling-stroke" points="1160,606 1411,482 1411,773 1160,898" fill="#888ca1" />
    </g>
  );
};

const Marker = ({ x, y }) => (
  <g transform={`translate(${x} ${y})`} fill="none" stroke="#1428e6" strokeWidth="1.300">
    <path d="M-6 -3.500l6 -3 6 3v7l-6 3-6-3zM-6 3.500h12M0 -6.500v13" />
  </g>
);

const Axes = () => (
  <g>
    <path d="M403 962v-18" stroke="#0000c0" strokeWidth="3" />
    <path d="M403 936l-4 10h8z" fill="#0000c0" />
    <path d="M405 961l11-6" stroke="#1f9a1f" strokeWidth="2" />
    <path d="M425 951l-11 1 3 7z" fill="#128c12" />
    <path d="M405 963l10 5" stroke="#c01010" strokeWidth="2.500" />
    <path d="M424 972l-10 0 4-7z" fill="#c01010" />
  </g>
);

const Win = () => (
  <svg width="11" height="12" viewBox="0 0 11 12" fill="none" stroke="#111">
    <path d="M.5 3.500h7v8h-7zM3 3.500V.5h7.500v8H7.500" />
  </svg>
);

const Pin = () => (
  <svg width="11" height="13" viewBox="0 0 11 13">
    <path d="M3 1h5v6h1.500v1.500h-3V12h-1V8.500h-3V7H3z" fill="#111" />
    <path d="M4.500 2v5" stroke="#fff" />
  </svg>
);

const PanelHead = ({ title, as: Box = PanelTitle }) => (
  <Box>
    {title}
    <TitleTools>
      <Caret />
      <Pin />
      <CloseBox>x</CloseBox>
    </TitleTools>
  </Box>
);

function App() {
  return (
    <Page>
      <GlobalStyle />
      <TitleBar>
        <svg width="16" height="17" viewBox="0 0 16 17">
          <rect width="16" height="17" fill="#d9202e" />
          <path d="M8 3l6 11H2z" fill="none" stroke="#fff" strokeWidth="1.300" />
          <path d="M8 6L6 10h4l-2 3" fill="none" stroke="#fff" />
        </svg>
        <TitleText>EPLAN Electric P8 2.9 SP1 - C:\Users\Public\EPLAN\Data\项目\新项目</TitleText>
        <WindowButtons>
          <WindowButton>
            <svg width="10" height="2"><path d="M0 .5h10" stroke="#111" /></svg>
          </WindowButton>
          <WindowButton><Win /></WindowButton>
          <WindowButton>
            <svg width="12" height="12"><path d="M.5.5l11 11M11.500.5l-11 11" stroke="#111" /></svg>
          </WindowButton>
        </WindowButtons>
      </TitleBar>

      <MenuBar>
        {MENUS.map((m) => {
          const open = m.startsWith("项目数据");
          return (
            <MenuItem key={m} $open={open}>
              {m}
              {open && (
                <Dropdown>
                  {DROPDOWN.map((d, i) =>
                    d === "-" ? (
                      <DropSep key={i} />
                    ) : (
                      <DropRow key={i} $active={d.active} $inset={d.active}>
                        {d.icon && <DropIcon><LayerIcon kind={d.icon} /></DropIcon>}
                        {d.t}
                        {d.sub && <Arrow />}
                        {d.active && (
                          <Flyout>
                            <DropRow>导航器 (N)</DropRow>
                            <DropSep $left={24} />
                            <DropRow $active $inset>
                              自动生成 ... (G)
                              <span>Ctrl+K</span>
                            </DropRow>
                            <DropRow>准备自动生成宏... (P)</DropRow>
                          </Flyout>
                        )}
                      </DropRow>
                    )
                  )}
                </Dropdown>
              )}
            </MenuItem>
          );
        })}
      </MenuBar>

      <ToolArea>
        <ToolRow>
          <ToolBar $pad={3}>
            <Tools items={ROW1} />
            <Spacer $w={1} />
            <Tools items={ROW1B} />
          </ToolBar>
        </ToolRow>
        <ToolRow>
          <ToolBar $pad={2}>
            <Tools items={ROW2} />
          </ToolBar>
        </ToolRow>
        <ToolRow>
          <ToolBar $pad={2}>
            <Tools items={ROW3} />
          </ToolBar>
          <ToolBar $pad={3}>
            <Tools items={ROW3B} />
          </ToolBar>
        </ToolRow>
      </ToolArea>

      <Main>
        <Dock>
          <PanelHead title="布局空间 - 新项目" />
          <DockTabs>
            <DockTab>页 - 新项目</DockTab>
            <DockTab $active>布局空间 - 新项目</DockTab>
          </DockTabs>
          <PanelBody>
            <FieldLabel>筛选器: (F)</FieldLabel>
            <FilterRow>
              <Select>
                - 未激活 -
                <svg width="10" height="6" viewBox="0 0 10 6">
                  <path d="M1 1l4 4 4-4" fill="none" stroke="#666" />
                </svg>
              </Select>
              <DotsButton>...</DotsButton>
            </FilterRow>
            <FieldLabel $top={9}>数值: (V)</FieldLabel>
            <ValueInput />
            <Tree>
              <TreeRow>
                <Expander>+</Expander>
                <svg width="16" height="16" viewBox="0 0 16 16" fill="none" stroke={B}>
                  <path d="M1 5l4-4h10v10l-4 4H1zM1 5h10v10M11 5l4-4M5 1v10h10M5 11l-4 4" />
                </svg>
                <TreeLabel>1</TreeLabel>
              </TreeRow>
            </Tree>
          </PanelBody>
          <BottomTabs>
            <BottomTab $active>树</BottomTab>
            <BottomTab>列表</BottomTab>
          </BottomTabs>
          <PanelHead title="图形预览" as={SecondTitle} />
          <PreviewFrame>
            <PreviewCanvas viewBox="785 245 626 662" preserveAspectRatio="none">
              <Enclosure small />
            </PreviewCanvas>
          </PreviewFrame>
        </Dock>

        <Doc>
          <DocTabs>
            <DocTab>
              1
              <CloseBox $w={14}>x</CloseBox>
            </DocTab>
            <Caret />
          </DocTabs>
          <Frame>
            <Viewport>
              <Scene viewBox="310 159 1578 853" preserveAspectRatio="xMinYMin slice">
                <polygon points="578,708 1036,477 1619,771 1161,1002" fill="#90c190" />
                <Enclosure />
                <Marker x={785} y={710} />
                <Marker x={971} y={804} />
                <Marker x={1160} y={898} />
                <Marker x={1286} y={836} />
                <Marker x={1412} y={773} />
                <Axes />
              </Scene>
              <Activate>
                <ActivateTitle>激活 Windows</ActivateTitle>
                <ActivateHint>转到“设置”以激活 Windows。</ActivateHint>
              </Activate>
            </Viewport>
          </Frame>
        </Doc>

        <SideBar>
          <SideGripper />
          {VERT.map((v, i) => {
            if (v === "|") return <SideSep key={i} />;
            if (v === "line")
              return (
                <React.Fragment key={i}>
                  <SideLine />
                  <SideGripper />
                </React.Fragment>
              );
            return (
              <SideButton key={i}>
                <svg width="20" height="20" viewBox="0 0 20 20">{v}</svg>
              </SideButton>
            );
          })}
        </SideBar>
      </Main>

      <StatusBar>
        <StatusCell $w={1413}>自动基于宏项目生成宏</StatusCell>
        <StatusCell $w={220}>打开: 10.00 mm</StatusCell>
        <StatusCell $w={126}>图形 1:1</StatusCell>
        <StatusCell $w={81} />
        <StatusCell />
      </StatusBar>

      <NoEntry />
      <Watermark>CSDN @平行的时光线</Watermark>
    </Page>
  );
}

export default App;
